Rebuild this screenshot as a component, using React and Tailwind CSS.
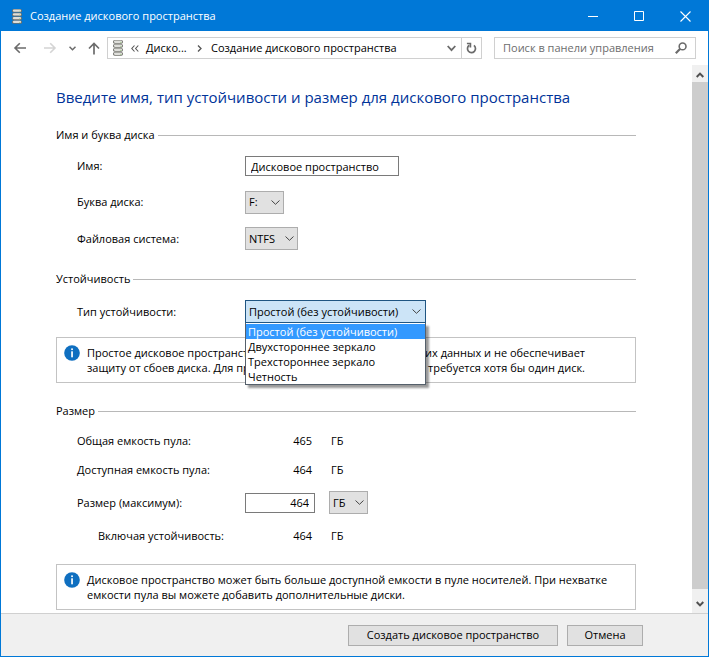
import { useState } from 'react';

const LAYOUTS = ['Простой (без устойчивости)', 'Двухстороннее зеркало', 'Трехстороннее зеркало', 'Четность'];

function Chevron({ className = '' }) {
  return (
    <svg className={`w-[9px] h-[5px] shrink-0 ${className}`} viewBox="0 0 9 5" fill="none" stroke="currentColor">
      <path d="M0.5 0.5L4.5 4.3L8.5 0.5" />
    </svg>
  );
}

function DiskStack({ className = '' }) {
  return (
    <svg className={`w-[10px] shrink-0 ${className}`} viewBox="0 0 10 16" preserveAspectRatio="none">
      {[0, 4, 8, 12].map((y) => (
        <g key={y}>
          <rect x="0" y={y + 0.1} width="10" height="3.6" rx="1.7" fill="#70706a" />
          <rect x="0.9" y={y + 0.5} width="8.2" height="2.4" rx="1.1" fill="#dededa" />
          <rect x="7" y={y + 1.9} width="1.4" height="0.9" fill="#a9cf94" />
        </g>
      ))}
    </svg>
  );
}

function InfoIcon() {
  return (
    <svg className="w-4 h-4 shrink-0" viewBox="0 0 16 16">
      <circle cx="8" cy="8" r="7.8" fill="#0f6fc0" />
      <rect x="7.2" y="3.4" width="1.7" height="1.7" fill="#fff" />
      <rect x="7.2" y="6.3" width="1.7" height="6" fill="#fff" />
    </svg>
  );
}

function Select({ id, options, className = '' }) {
  return (
    <div className="relative">
      <select
        id={id}
        className={`block appearance-none h-[23px] pl-[3px] border border-[#adadad] bg-[#e1e1e1] outline-none ${className}`}
      >
        {options.map((o) => (
          <option key={o}>{o}</option>
        ))}
      </select>
      <Chevron className="absolute right-1 top-[9px] text-[#444] pointer-events-none" />
    </div>
  );
}

function SectionTitle({ children }) {
  return (
    <div className="flex items-center gap-[3px] h-5">
      <h2>{children}</h2>
      <div className="flex-1 h-px bg-[#b8b8b8]" />
    </div>
  );
}

function InfoBox({ children }) {
  return (
    <div className="flex gap-[7px] h-[46px] pl-[7px] pt-[7px] border border-[#c3c3c3] whitespace-nowrap">
      <InfoIcon />
      <div className="leading-[15px]">{children}</div>
    </div>
  );
}

function SizeRow({ label, value }) {
  return (
    <div className="flex items-center h-[29px]">
      <span className="w-[168px]">{label}</span>
      <span className="w-[67px] text-right">{value}</span>
      <span className="ml-[19px]">ГБ</span>
    </div>
  );
}

function TitleBar() {
  return (
    <header className="flex items-center h-[30px] shrink-0 pl-[11px] bg-[#0078d7] text-white">
      <DiskStack className="h-[15px]" />
      <h1 className="ml-2 flex-1">Создание дискового пространства</h1>
      <button className="w-[46px] h-full flex items-center justify-center" aria-label="Свернуть">
        <svg className="w-[10px] h-[10px]" viewBox="0 0 10 10" stroke="currentColor"><path d="M0 5.5H10" /></svg>
      </button>
      <button className="w-[46px] h-full flex items-center justify-center" aria-label="Развернуть">
        <svg className="w-[10px] h-[10px]" viewBox="0 0 10 10" fill="none" stroke="currentColor"><path d="M0.5 0.5H9.5V9.5H0.5Z" /></svg>
      </button>
      <button className="w-[46px] h-full flex items-center justify-center" aria-label="Закрыть">
        <svg className="w-[11px] h-[11px]" viewBox="0 0 11 11" stroke="currentColor" strokeWidth="1.1"><path d="M0.5 0.5L10.5 10.5M10.5 0.5L0.5 10.5" /></svg>
      </button>
    </header>
  );
}

function NavBar() {
  return (
    <nav className="flex items-center h-[34px] shrink-0 px-3 text-[#6b6b6b]">
      <button aria-label="Назад">
        <svg className="w-[14px] h-3" viewBox="0 0 14 12" fill="none" stroke="currentColor" strokeWidth="1.6"><path d="M13 6H2M6.8 1.2L2 6L6.8 10.8" /></svg>
      </button>
      <button className="ml-4 text-[#d4d4d4]" aria-label="Вперед">
        <svg className="w-[14px] h-3" viewBox="0 0 14 12" fill="none" stroke="currentColor" strokeWidth="1.6"><path d="M1 6H12M7.2 1.2L12 6L7.2 10.8" /></svg>
      </button>
      <button className="ml-3" aria-label="Последние расположения">
        <svg className="w-[7px] h-[5px]" viewBox="0 0 7 5" fill="none" stroke="currentColor" strokeWidth="1.5"><path d="M0.5 0.7L3.5 3.7L6.5 0.7" /></svg>
      </button>
      <button className="ml-3" aria-label="Вверх">
        <svg className="w-3 h-[13px]" viewBox="0 0 12 13" fill="none" stroke="currentColor" strokeWidth="1.7"><path d="M6 12.5V1.5M1 6.5L6 1.5L11 6.5" /></svg>
      </button>
      <div className="flex flex-1 items-center h-[22px] ml-[7px] border border-[#d0d0d0] text-black">
        <DiskStack className="ml-[5px] h-4" />
        <svg className="ml-2 w-2 h-[7px] text-[#555]" viewBox="0 0 8 7" fill="none" stroke="currentColor" strokeWidth="1.1"><path d="M3.5 0.5L0.8 3.5L3.5 6.5M7.3 0.5L4.6 3.5L7.3 6.5" /></svg>
        <a href="#pools" className="ml-[7px] w-11">Диско...</a>
        <svg className="ml-[7px] w-[5px] h-[7px] text-[#555]" viewBox="0 0 5 7" fill="none" stroke="currentColor" strokeWidth="1.3"><path d="M1 0.5L4 3.5L1 6.5" /></svg>
        <a href="#create" className="ml-[9px] flex-1 whitespace-nowrap">Создание дискового пространства</a>
        <button className="mr-[5px] pt-px text-[#6b6b6b]" aria-label="Предыдущие расположения">
          <svg className="w-[9px] h-[7px]" viewBox="0 0 9 7" fill="none" stroke="currentColor" strokeWidth="1.8"><path d="M0.7 1L4.5 5.2L8.3 1" /></svg>
        </button>
        <button className="w-5 h-full flex items-center justify-center border-l border-[#d0d0d0] text-[#6b6b6b]" aria-label="Обновить">
          <svg className="w-[11px] h-3" viewBox="0 0 11 12" fill="none" stroke="currentColor" strokeWidth="1.7">
            <path d="M7.9 3.4A4 4 0 1 1 3.2 3.3" />
            <path d="M0.9 1.5H4.4V5.4" />
          </svg>
        </button>
      </div>
      <div className="flex items-center w-[202px] h-[22px] ml-3 px-2 border border-[#d0d0d0]">
        <input aria-label="Поиск" placeholder="Поиск в панели управления" className="flex-1 min-w-0 outline-none placeholder:text-[#6d6d6d]" />
        <svg className="w-3 h-3" viewBox="0 0 12 12" fill="none" stroke="currentColor" strokeWidth="1.6">
          <circle cx="7.6" cy="4.4" r="3.4" />
          <path d="M5.2 6.8L0.8 11.2" strokeWidth="2.2" />
        </svg>
      </div>
    </nav>
  );
}

function ScrollBar() {
  return (
    <div className="flex flex-col w-4 shrink-0 bg-[#f0f0f0] text-[#505050]">
      <button className="h-[17px] pt-[3px] flex items-center justify-center" aria-label="Прокрутить вверх">
        <svg className="w-2 h-[6px]" viewBox="0 0 8 6" fill="none" stroke="currentColor" strokeWidth="2"><path d="M0.7 5L4 1.6L7.3 5" /></svg>
      </button>
      <div className="flex-1 bg-[#cdcdcd]" />
      <button className="h-6 pt-[6px] flex items-center justify-center" aria-label="Прокрутить вниз">
        <svg className="w-2 h-[6px]" viewBox="0 0 8 6" fill="none" stroke="currentColor" strokeWidth="2"><path d="M0.7 1L4 4.4L7.3 1" /></svg>
      </button>
    </div>
  );
}

function ResiliencySelect() {
  const [open, setOpen] = useState(true);
  const [selected, setSelected] = useState(LAYOUTS[0]);

  const choose = (item) => {
    setSelected(item);
    setOpen(false);
  };

  return (
    <div className="relative w-[181px]">
      <button
        id="resiliency"
        aria-haspopup="listbox"
        aria-expanded={open}
        onClick={() => setOpen(!open)}
        className="flex items-center justify-between w-full h-[23px] pl-[3px] pr-1 border border-[#1f5582] bg-[#cce4f7] whitespace-nowrap"
      >
        {selected}
        <Chevron className="text-[#444]" />
      </button>
      {open && (
        <ul role="listbox" className="absolute left-0 top-full z-10 w-full pt-px border border-t-0 border-[#55606b] bg-white leading-[15px] shadow-[3px_3px_2px_rgba(0,0,0,0.4)]">
          {LAYOUTS.map((item) => (
            <li
              key={item}
              role="option"
              aria-selected={item === selected}
              onClick={() => choose(item)}
              className={`pl-[2px] whitespace-nowrap ${item === selected ? 'bg-[#3399ff] text-white' : ''}`}
            >
              {item}
            </li>
          ))}
        </ul>
      )}
    </div>
  );
}

export default function App() {
  return (
    <div className="flex flex-col h-screen border border-[#0078d7] bg-white font-['Open_Sans','Noto_Sans',sans-serif] text-[11px] leading-4 text-black">
      <TitleBar />
      <NavBar />

      <div className="flex flex-1 min-h-0">
        <main className="flex-1 min-w-0 overflow-hidden pl-[55px] pr-14 pt-5">
          <h1 className="text-[15px] leading-6 text-[#003399] whitespace-nowrap">Введите имя, тип устойчивости и размер для дискового пространства</h1>

          <section className="mt-4">
            <SectionTitle>Имя и буква диска</SectionTitle>
            <div className="mt-[3px] pl-[21px]">
              <div className="flex items-center h-9">
                <label htmlFor="name" className="w-[168px]">Имя:</label>
                <input id="name" defaultValue="Дисковое пространство" className="w-[154px] h-5 pl-[5px] border border-[#7a7a7a] outline-none" />
              </div>
              <div className="flex items-center h-9">
                <label htmlFor="letter" className="w-[168px]">Буква диска:</label>
                <Select id="letter" options={['F:']} className="w-[39px]" />
              </div>
              <div className="flex items-center h-[37px]">
                <label htmlFor="fs" className="w-[168px]">Файловая система:</label>
                <Select id="fs" options={['NTFS']} className="w-[53px]" />
              </div>
            </div>
          </section>

          <section className="mt-3">
            <SectionTitle>Устойчивость</SectionTitle>
            <div className="flex items-center mt-[11px] pl-[21px]">
              <label htmlFor="resiliency" className="w-[168px]">Тип устойчивости:</label>
              <ResiliencySelect />
            </div>
            <div className="mt-[14px]">
              <InfoBox>
                <div className="w-[498px]">
                  <p className="flex justify-between">
                    <span>Простое дисковое пространство записывает </span>
                    <span>одну копию ваших данных и не обеспечивает</span>
                  </p>
                  <p className="flex justify-between">
                    <span>защиту от сбоев диска. Для простого </span>
                    <span>дискового пространства требуется хотя бы один диск.</span>
                  </p>
                </div>
              </InfoBox>
            </div>
          </section>

          <section className="mt-[18px]">
            <SectionTitle>Размер</SectionTitle>
            <div className="mt-[5px] pl-[21px]">
              <SizeRow label="Общая емкость пула:" value="465" />
              <SizeRow label="Доступная емкость пула:" value="464" />
              <div className="flex items-center h-[37px]">
                <label htmlFor="size" className="w-[168px]">Размер (максимум):</label>
                <input id="size" defaultValue="464" className="w-[70px] h-5 pr-[5px] border border-[#7a7a7a] text-right outline-none" />
                <div className="ml-[14px]">
                  <Select id="unit" options={['ГБ']} className="w-[39px]" />
                </div>
              </div>
              <SizeRow label={<span className="pl-[21px]">Включая устойчивость:</span>} value="464" />
            </div>
            <div className="mt-[14px]">
              <InfoBox>
                <p>Дисковое пространство может быть больше доступной емкости в пуле носителей. При нехватке</p>
                <p>емкости пула вы можете добавить дополнительные диски.</p>
              </InfoBox>
            </div>
          </section>
        </main>
        <ScrollBar />
      </div>

      <footer className="flex items-center justify-end gap-[9px] h-[43px] shrink-0 pr-[65px] border-t border-[#d0d0d0] bg-[#f0f0f0]">
        <button className="w-[210px] h-[21px] border border-[#adadad] bg-[#e1e1e1]">Создать дисковое пространство</button>
        <button className="w-[76px] h-[21px] border border-[#adadad] bg-[#e1e1e1]">Отмена</button>
      </footer>
    </div>
  );
}
